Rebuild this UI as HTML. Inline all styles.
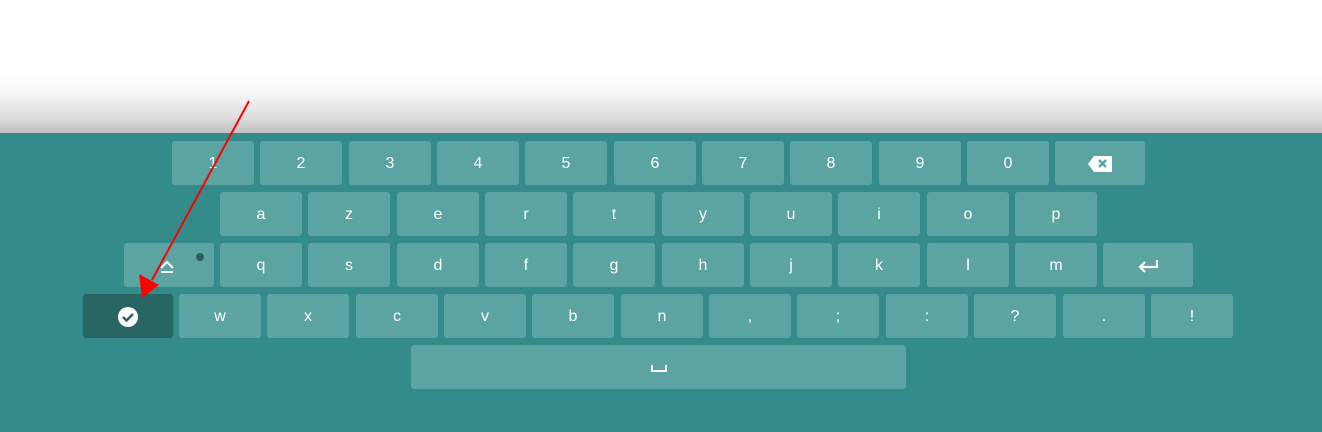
<!DOCTYPE html><html><head><style>
body{margin:0;width:1322px;height:432px;overflow:hidden;position:relative;background:#fff;font-family:"Liberation Sans",sans-serif}
#g{position:absolute;left:0;top:75px;width:1322px;height:58px;background:linear-gradient(#fff,#f4f4f4 35%,#dcdcdc 75%,#c0c0c0)}
#kb{position:absolute;left:0;top:133px;width:1322px;height:299px;background:#338c89}
.k{position:absolute;height:44px;background:#5ba4a1;border-radius:3px;color:#fff;font-size:16px;display:flex;align-items:center;justify-content:center;padding-top:2px;box-sizing:border-box}
</style></head><body>
<div id="g"></div><div id="kb"></div>
<div id="keys"></div>
<script>
var h='';function k(x,y,w,t,bg){h+='<div class="k" style="left:'+x+'px;top:'+y+'px;width:'+w+'px'+(bg?';background:'+bg:'')+'">'+t+'</div>';}
var p=88.35;
'1234567890'.split('').forEach(function(c,i){k(Math.round(172+i*p),141,82,c)});
k(1055,141,90,'<svg width="26" height="18" viewBox="0 0 26 18"><path d="M7 1H25V17H7L1 9Z" fill="#fff"/><path d="M12 5L19 12M19 5L12 12" stroke="#5ba4a1" stroke-width="2.4"/></svg>');
'azertyuiop'.split('').forEach(function(c,i){k(Math.round(220+i*p),192,82,c)});
k(124,243,90,'<svg width="16" height="16" viewBox="0 0 16 16" style="margin-left:-4px"><path d="M2 10L8 4L14 10" fill="none" stroke="#fff" stroke-width="2"/><path d="M2 14H14" stroke="#fff" stroke-width="2"/></svg><span style="position:absolute;left:72px;top:10px;width:8px;height:8px;border-radius:50%;background:#2f5f5d"></span>');
'qsdfghjklm'.split('').forEach(function(c,i){k(Math.round(220+i*p),243,82,c)});
k(1103,243,90,'<svg width="22" height="16" viewBox="0 0 22 16"><path d="M20 2V9H3M8 4L3 9L8 14" fill="none" stroke="#fff" stroke-width="2.2"/></svg>');
k(83,294,90,'<svg width="20" height="20" viewBox="0 0 20 20"><circle cx="10" cy="10" r="10" fill="#fff"/><path d="M5 10L8.5 13.5L15 7" fill="none" stroke="#276663" stroke-width="2.5"/></svg>','#276663');
'wxcvbn,;:?.!'.split('').forEach(function(c,i){k(Math.round(179+i*p),294,82,c)});
k(411,345,495,'<svg width="16" height="10" viewBox="0 0 16 10"><path d="M1 2V8H15V2" fill="none" stroke="#fff" stroke-width="2"/></svg>');
document.getElementById('keys').innerHTML=h;
</script>
<svg style="position:absolute;left:0;top:0" width="1322" height="432"><line x1="249" y1="101" x2="152" y2="280" stroke="#f00" stroke-width="2"/><path d="M142 298L139 274L159 285Z" fill="#f00"/></svg>
</body></html>
